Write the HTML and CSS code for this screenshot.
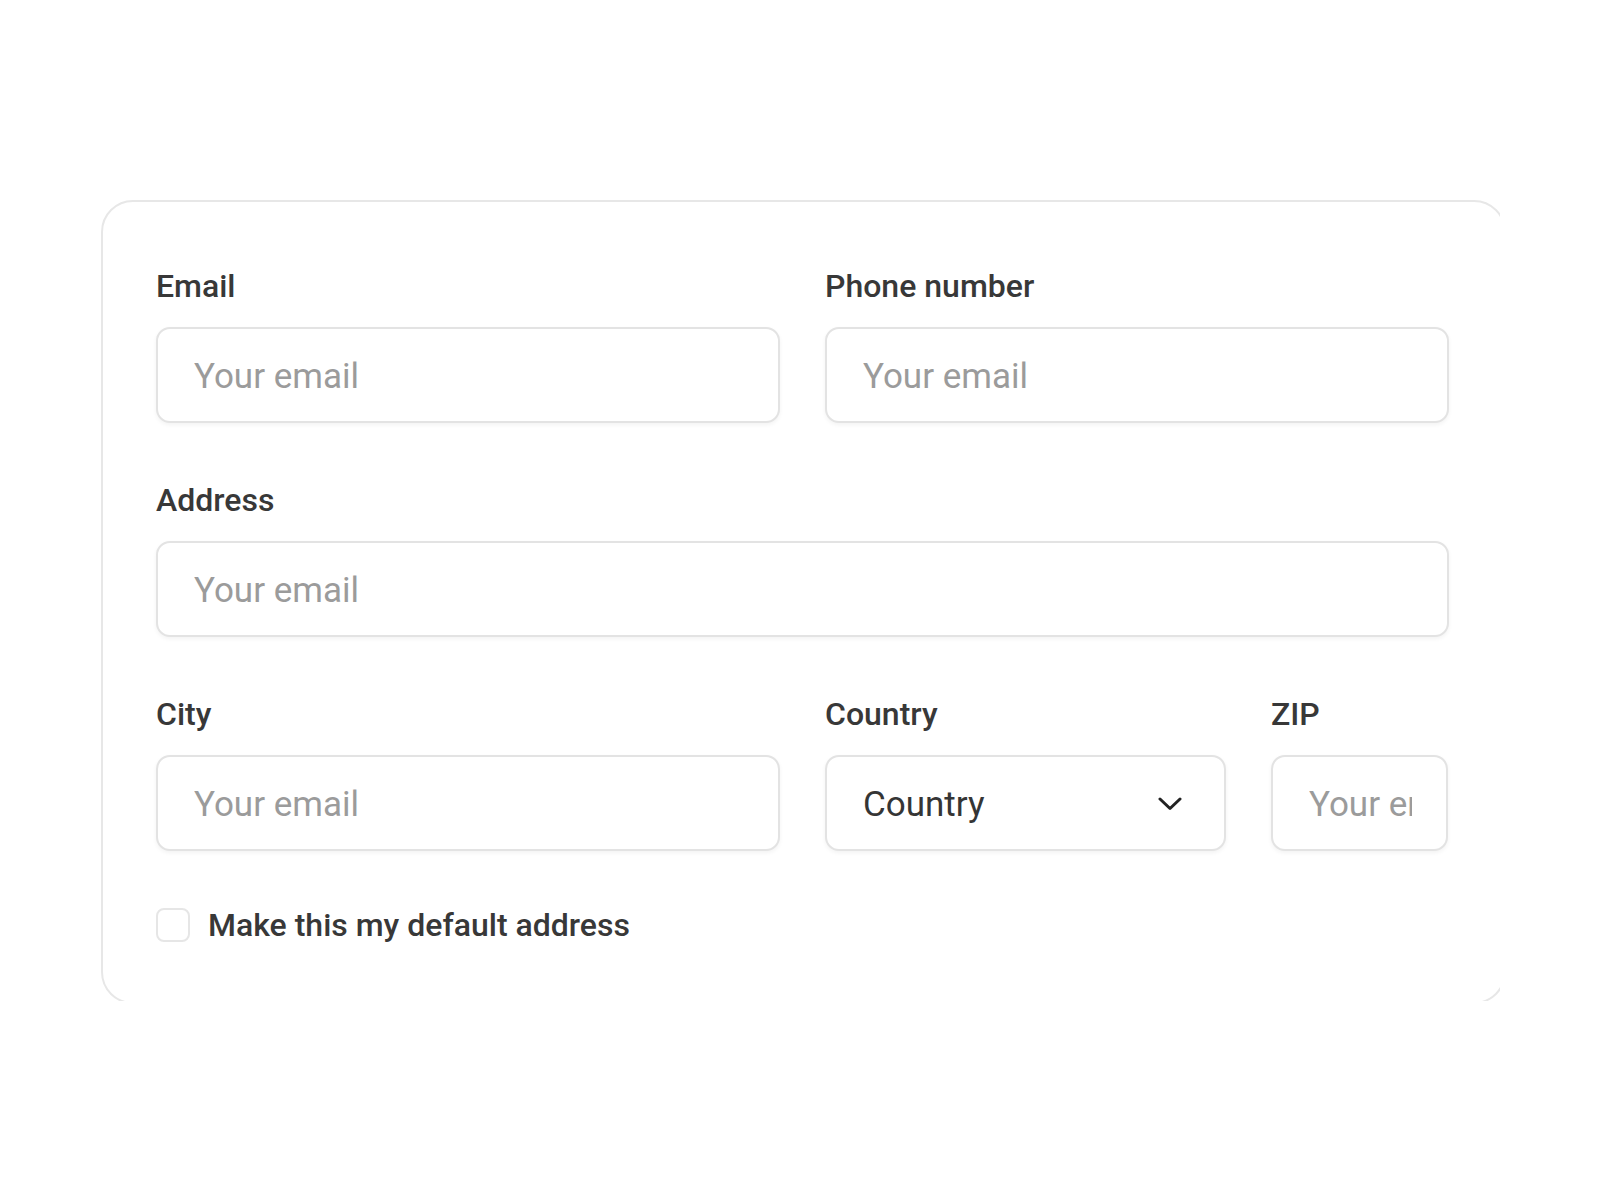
FILE: index.html
```html
<!DOCTYPE html>
<html lang="en">
<head>
    <meta charset="UTF-8">
    <meta name="viewport" content="width=device-width, initial-scale=1.0">
    <title>Address form</title>
    <link rel="stylesheet" href="styles.css">
</head>
<body>
    <div class="frame">
        <form class="card">
            <div class="row row-two">
                <div class="field">
                    <label for="email">Email</label>
                    <input id="email" type="email" placeholder="Your email">
                </div>
                <div class="field">
                    <label for="phone">Phone number</label>
                    <input id="phone" type="tel" placeholder="Your email">
                </div>
            </div>
            <div class="row">
                <div class="field">
                    <label for="address">Address</label>
                    <input id="address" type="text" placeholder="Your email">
                </div>
            </div>
            <div class="row row-three">
                <div class="field">
                    <label for="city">City</label>
                    <input id="city" type="text" placeholder="Your email">
                </div>
                <div class="field">
                    <label for="country">Country</label>
                    <div class="select-box">
                        <select id="country">
                            <option>Country</option>
                        </select>
                        <svg class="chevron" width="24" height="14" viewBox="0 0 24 14" fill="none">
                            <path d="M2 2 L12 11.5 L22 2" stroke="#222" stroke-width="3" stroke-linecap="round" stroke-linejoin="round"/>
                        </svg>
                    </div>
                </div>
                <div class="field">
                    <label for="zip">ZIP</label>
                    <input id="zip" type="text" placeholder="Your email">
                </div>
            </div>
            <label class="check">
                <input type="checkbox">
                <span>Make this my default address</span>
            </label>
        </form>
    </div>
</body>
</html>
```

FILE: styles.css
```css
body {
    margin: 0;
    background-color: #fff;
    font-family: Roboto, "Liberation Sans", Arial, sans-serif;
}
.frame {
    margin: 200px 0 0 101px;
    width: 1399px;
    height: 801px;
    overflow: hidden;
}
.card {
    box-sizing: border-box;
    width: 1405px;
    height: 804px;
    border: 2px solid #e7e7e7;
    border-radius: 32px;
    padding: 66px 55px 0 53px;
    background-color: #fff;
}
.row {
    display: grid;
    grid-template-columns: 1fr;
    width: 1293px;
    margin-bottom: 59px;
}
.row-two {
    grid-template-columns: 624px 624px;
    column-gap: 45px;
}
.row-three {
    grid-template-columns: 624px 401px 177px;
    column-gap: 45px;
    margin-bottom: 55px;
}
.field {
    display: flex;
    flex-direction: column;
    gap: 23px;
}
.field label {
    font-size: 32px;
    line-height: 36px;
    font-weight: 500;
    color: #383838;
}
.field input,
.select-box {
    box-sizing: border-box;
    height: 96px;
    border: 2px solid #e3e3e3;
    border-radius: 14px;
    box-shadow: 0 2px 4px rgba(0,0,0,0.05);
    background-color: #fff;
    font-family: inherit;
    font-size: 35px;
    color: #353535;
    min-width: 0;
    width: 100%;
}
.field input {
    padding: 2px 34px 0 36px;
    outline: none;
}
.field input::placeholder {
    color: #9b9b9b;
}
.select-box {
    display: flex;
    align-items: center;
    padding: 2px 42px 0 36px;
}
.select-box select {
    flex: 1;
    appearance: none;
    border: none;
    background: transparent;
    font-family: inherit;
    font-size: 35px;
    color: #353535;
    padding: 0;
    outline: none;
}
.chevron {
    flex-shrink: 0;
}
.check {
    display: flex;
    align-items: center;
    gap: 18px;
    font-size: 32px;
    font-weight: 500;
    color: #383838;
}
.check input {
    appearance: none;
    margin: 0;
    width: 34px;
    height: 34px;
    border: 2px solid #e6e6e6;
    border-radius: 8px;
    background-color: #fff;
}
```
